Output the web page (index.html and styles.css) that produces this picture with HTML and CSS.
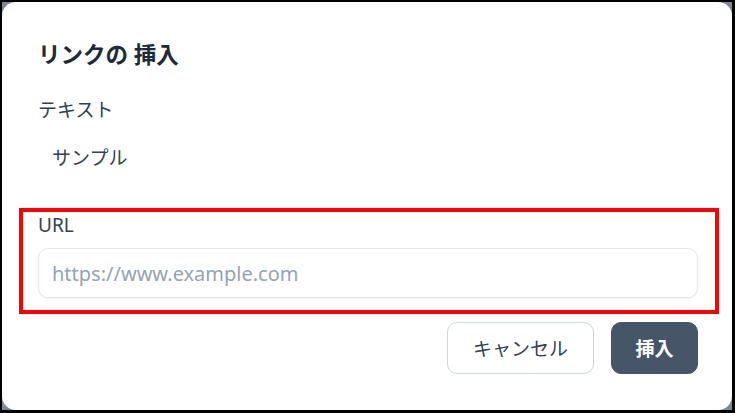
FILE: index.html
```html
<!DOCTYPE html>
<html lang="ja">
<head>
<meta charset="utf-8">
<title>リンクの挿入</title>
<link rel="stylesheet" href="styles.css">
</head>
<body>
<div class="frame">
  <div class="dialog">
    <h2 class="title">リンクの 挿入</h2>
    <div class="label">テキスト</div>
    <div class="value">サンプル</div>
    <div class="highlight">
      <label class="url-label" for="url">URL</label>
      <input class="url-input" id="url" type="text" placeholder="https://www.example.com">
    </div>
    <div class="actions">
      <button class="btn btn-cancel" type="button">キャンセル</button>
      <button class="btn btn-primary" type="button">挿入</button>
    </div>
  </div>
</div>
</body>
</html>
```
FILE: styles.css
```css
html, body {
  margin: 0;
  padding: 0;
  background: #ffffff;
}
body {
  font-family: "Noto Sans", "Noto Sans CJK JP", sans-serif;
  color: #334155;
}
.frame {
  box-sizing: border-box;
  width: 735px;
  height: 413px;
  border-style: solid;
  border-color: #000000;
  border-width: 2px 3px 3px 2px;
  background: #7d889b;
  display: flex;
}
.dialog {
  flex: 1;
  background: #ffffff;
  border-radius: 14px;
  padding: 37px 34px 0 36px;
  display: flex;
  flex-direction: column;
}
.title {
  margin: 0;
  font-size: 22.5px;
  line-height: 32px;
  font-weight: 700;
  color: #1e293b;
}
.label {
  margin-top: 25px;
  font-size: 19px;
  line-height: 28px;
  color: #334155;
}
.value {
  margin-top: 20px;
  padding-left: 14px;
  font-size: 19px;
  line-height: 28px;
  color: #334155;
}
.highlight {
  margin: 36px -21px 0 -19px;
  border: 4px solid #ff0000;
  padding: 1px 17px 12px 15px;
  display: flex;
  flex-direction: column;
}
.url-label {
  font-size: 19px;
  line-height: 24px;
  color: #334155;
}
.url-input {
  margin-top: 11px;
  box-sizing: border-box;
  height: 50px;
  width: 100%;
  border: 1px solid #e2e8f0;
  border-radius: 10px;
  box-shadow: 0 1px 2px rgba(15, 23, 42, 0.06);
  padding: 0 13px;
  font-family: "Noto Sans", "Noto Sans CJK JP", sans-serif;
  font-size: 20px;
  color: #334155;
  background: #ffffff;
  outline: none;
}
.url-input::placeholder {
  color: #94a3b8;
}
.actions {
  margin-top: 8px;
  display: flex;
  justify-content: flex-end;
  gap: 17px;
}
.btn {
  box-sizing: border-box;
  height: 52px;
  border-radius: 10px;
  font-family: "Noto Sans", "Noto Sans CJK JP", sans-serif;
  font-size: 19px;
  cursor: pointer;
}
.btn-cancel {
  width: 147px;
  background: #ffffff;
  border: 1px solid #cbd5e1;
  color: #334155;
}
.btn-primary {
  width: 87px;
  background: #475569;
  border: 1px solid #475569;
  color: #ffffff;
  font-weight: 700;
}
```
